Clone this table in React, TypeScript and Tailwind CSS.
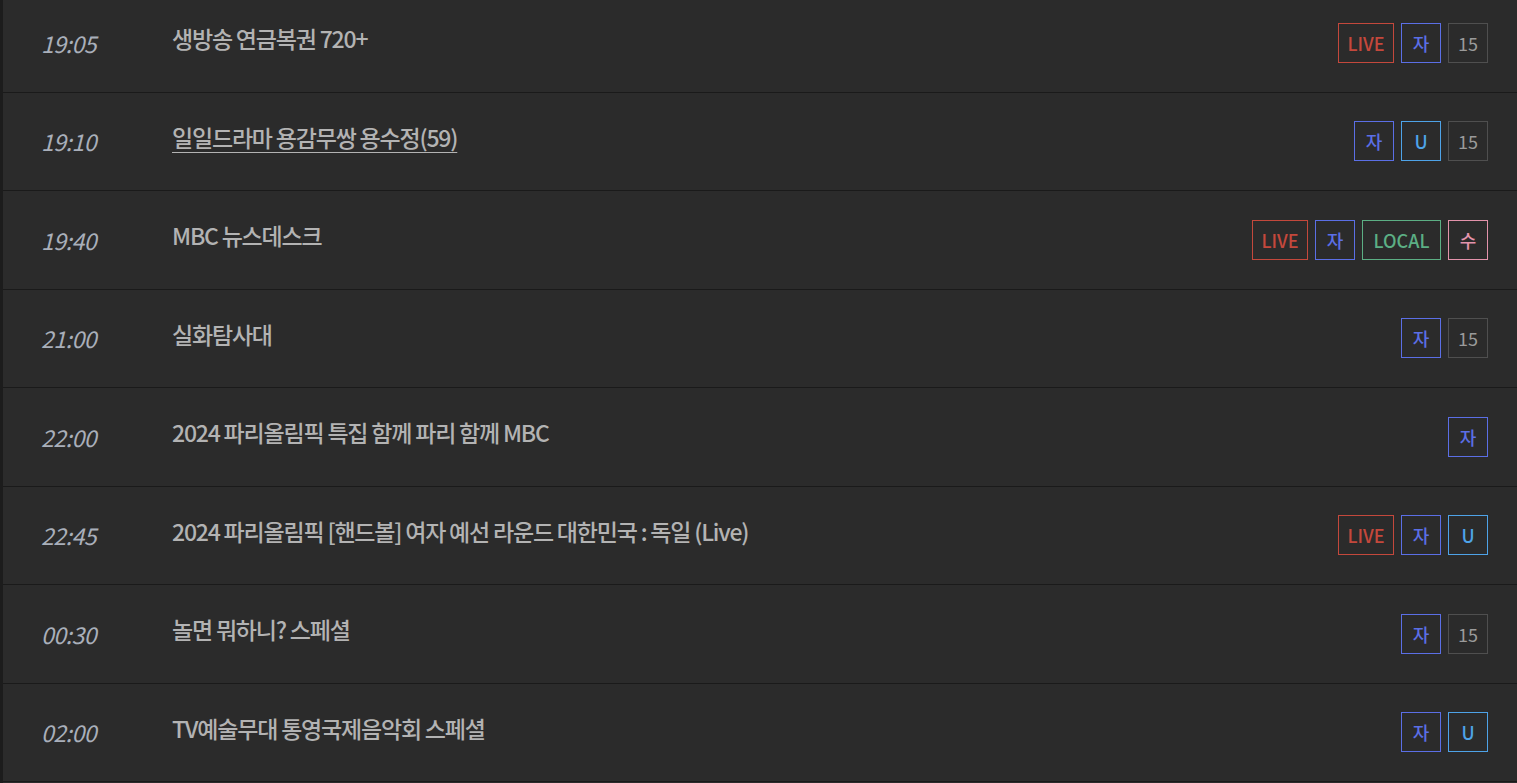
import React from 'react';

type Badge = 'LIVE' | '자' | 'U' | '15' | 'LOCAL' | '수';

const rows: { time: string; title: string; link?: boolean; badges: Badge[] }[] = [
  { time: '19:05', title: '생방송 연금복권 720+', badges: ['LIVE', '자', '15'] },
  { time: '19:10', title: '일일드라마 용감무쌍 용수정(59)', link: true, badges: ['자', 'U', '15'] },
  { time: '19:40', title: 'MBC 뉴스데스크', badges: ['LIVE', '자', 'LOCAL', '수'] },
  { time: '21:00', title: '실화탐사대', badges: ['자', '15'] },
  { time: '22:00', title: '2024 파리올림픽 특집 함께 파리 함께 MBC', badges: ['자'] },
  { time: '22:45', title: '2024 파리올림픽 [핸드볼] 여자 예선 라운드 대한민국 : 독일 (Live)', badges: ['LIVE', '자', 'U'] },
  { time: '00:30', title: '놀면 뭐하니? 스페셜', badges: ['자', '15'] },
  { time: '02:00', title: 'TV예술무대 통영국제음악회 스페셜', badges: ['자', 'U'] },
];

function Tag({ kind }: { kind: Badge }) {
  const base = 'h-10 flex items-center justify-center border text-[18px] font-medium leading-none';
  if (kind === 'LIVE') return <span className={`${base} w-14 border-[#c4483c] text-[#c4483c]`}>LIVE</span>;
  if (kind === '자') return <span className={`${base} w-10 border-[#5b6fe6] text-[#5b6fe6]`}>자</span>;
  if (kind === 'U') return <span className={`${base} w-10 border-[#4ea3e8] text-[#4ea3e8]`}>U</span>;
  if (kind === 'LOCAL') return <span className={`${base} w-[79px] border-[#5caf84] text-[#5caf84]`}>LOCAL</span>;
  if (kind === '수') return <span className={`${base} w-10 border-[#e493ab] text-[#e493ab]`}>수</span>;
  return <span className={`${base} w-10 border-[#4f4f4f] text-[#9a9a9a] font-normal`}>15</span>;
}

export default function App() {
  return (
    <div
      className="h-[783px] overflow-hidden bg-[#2b2b2b] border-l-[3px] border-[#1c1c1c]"
      style={{ fontFamily: '"Noto Sans CJK KR", "Noto Sans", sans-serif' }}
    >
      <ul className="-mt-[6px]">
        {rows.map((r) => (
          <li key={r.time} className="h-[98.5px] flex items-center border-b border-[#1a1a1a] pr-[29px]">
            <span className="w-[169px] pl-[38px] italic text-[23px] tracking-[-0.5px] text-[#a9afba]">
              {r.time}
            </span>
            <span
              className={`flex-1 text-[23px] font-medium tracking-[-1.2px] text-[#b3b3b3] -mt-[9px] ${
                r.link ? 'underline underline-offset-[5px] decoration-1' : ''
              }`}
            >
              {r.title}
            </span>
            <div className="flex gap-[7px]">
              {r.badges.map((b, i) => (
                <Tag key={i} kind={b} />
              ))}
            </div>
          </li>
        ))}
      </ul>
    </div>
  );
}
